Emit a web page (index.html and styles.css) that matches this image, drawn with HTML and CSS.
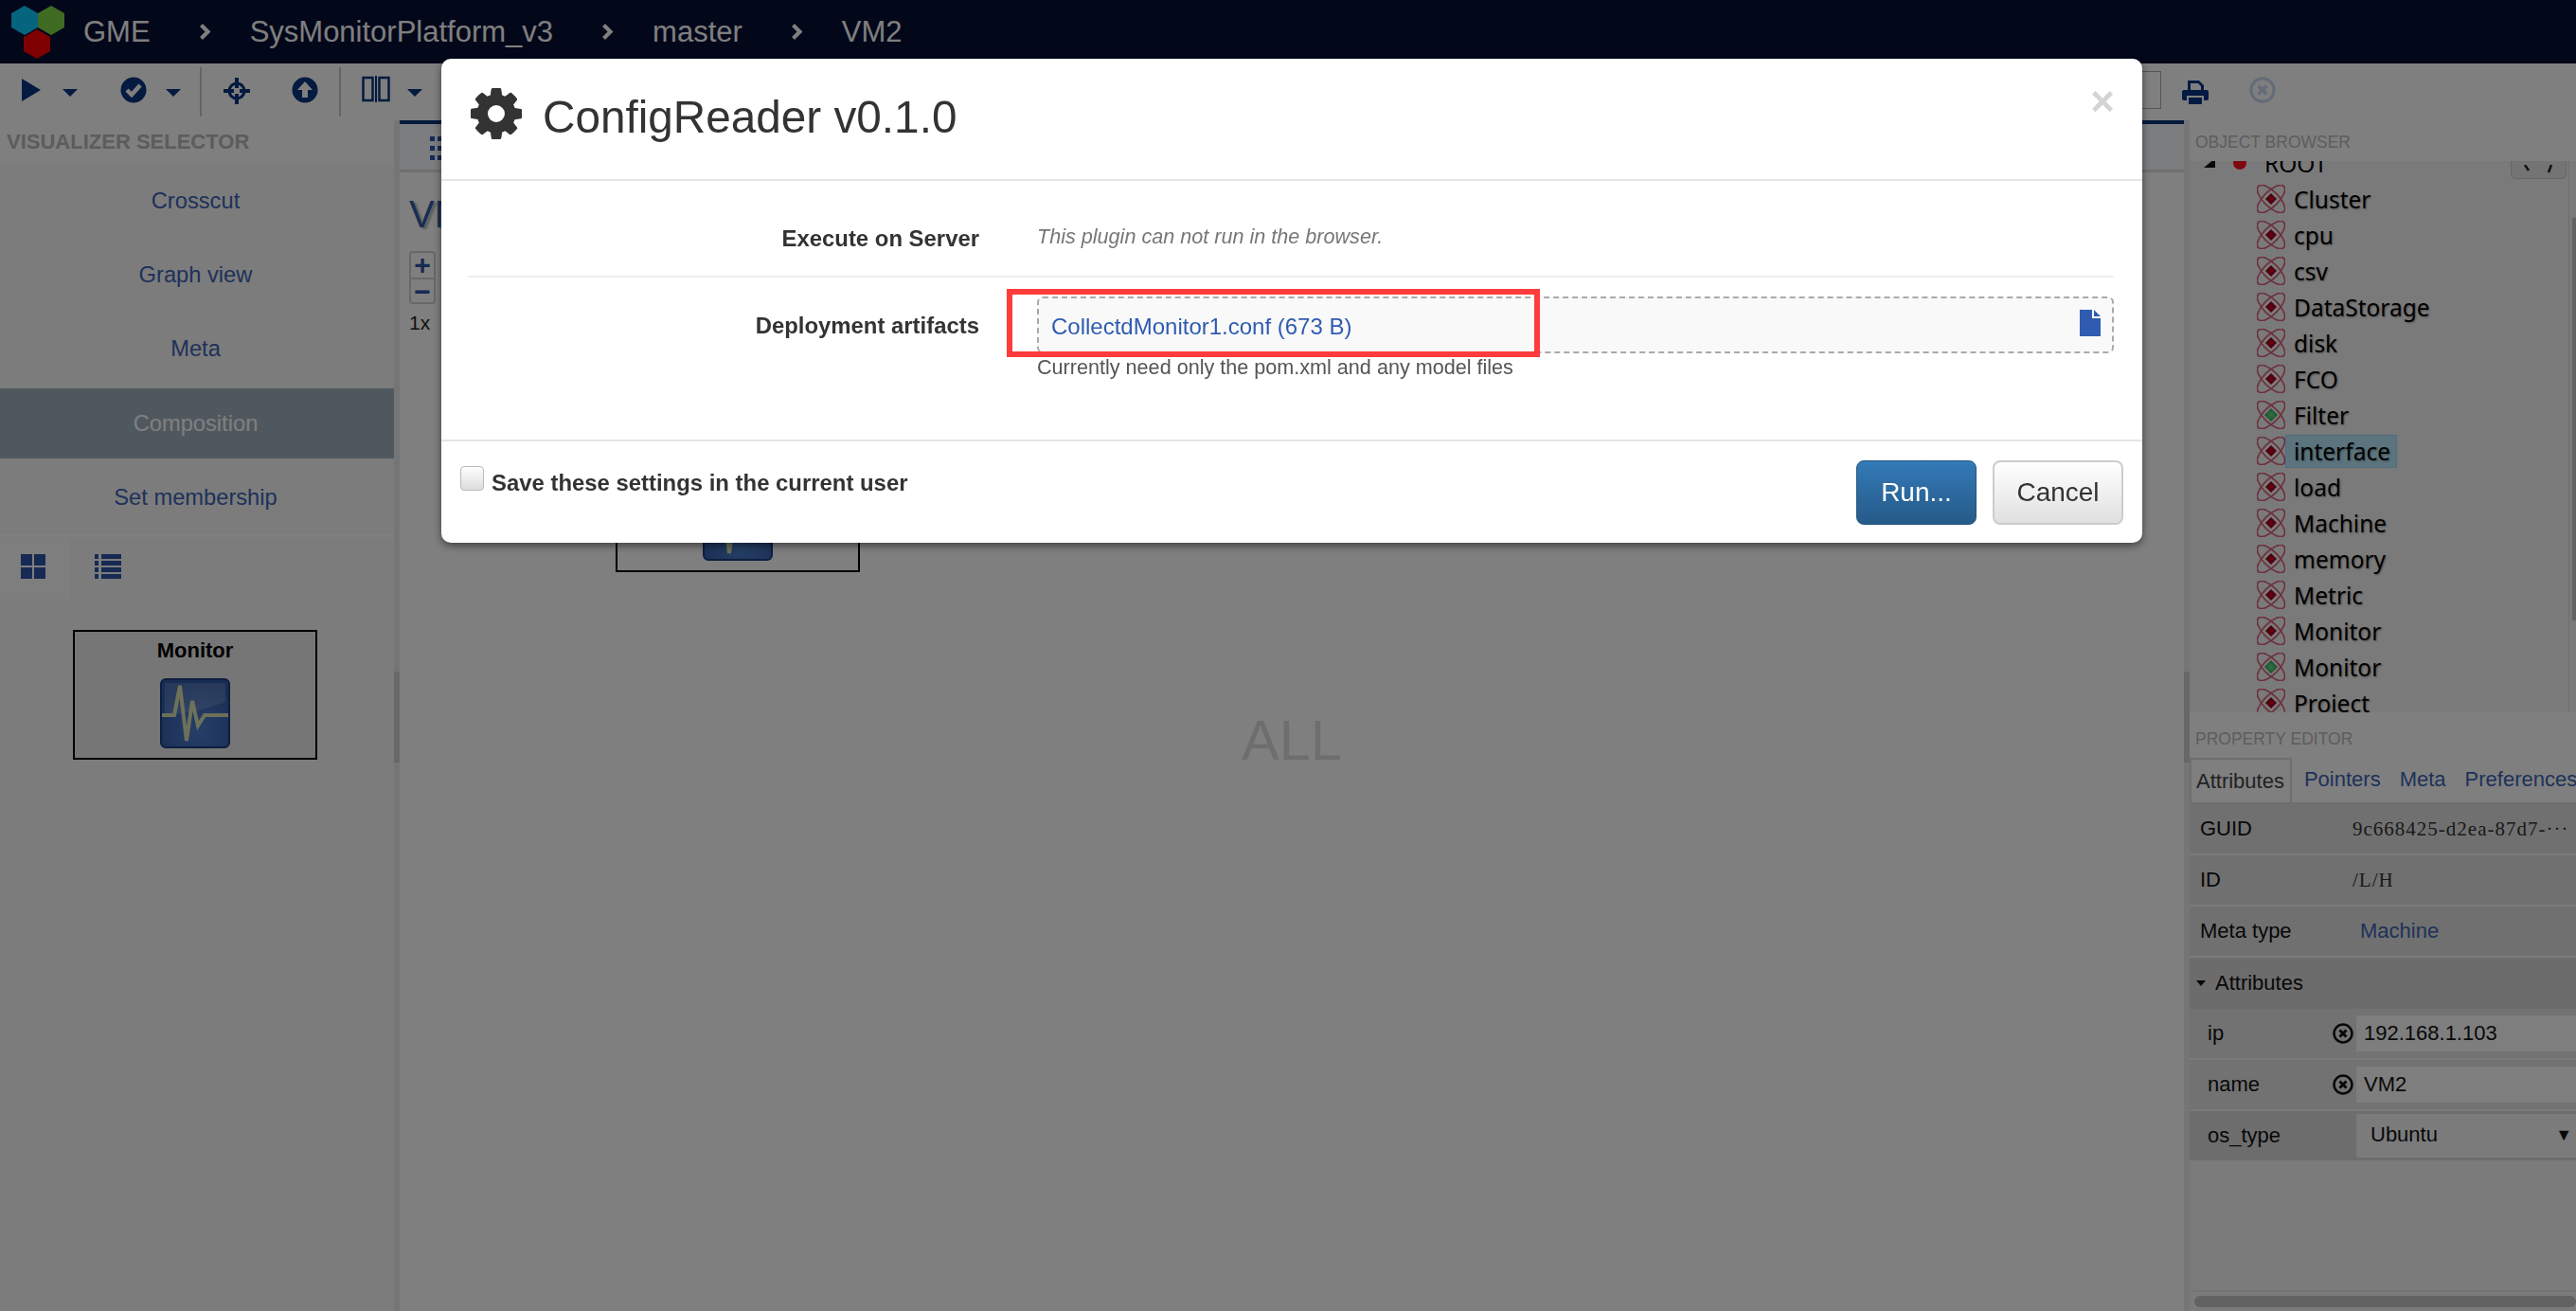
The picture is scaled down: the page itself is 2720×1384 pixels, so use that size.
FILE: index.html
```html
<!DOCTYPE html>
<html lang="en">
<head>
  <meta charset="UTF-8">
  <title>GME - ConfigReader</title>
  <link rel="stylesheet" href="styles.css">
</head>
<body>
  <svg class="defs" width="0" height="0">
    <defs>
      <radialGradient id="redGem"><stop offset="0" stop-color="#c80024"/><stop offset="1" stop-color="#8c0018"/></radialGradient>
      <radialGradient id="greenGem"><stop offset="0" stop-color="#70e090"/><stop offset="1" stop-color="#2aa050"/></radialGradient>
      <radialGradient id="monitorFace" cx="0.55" cy="0.75" r="0.7"><stop offset="0" stop-color="#4f7fcf"/><stop offset="1" stop-color="#305aa8"/></radialGradient>
      <g id="orbits" fill="none" stroke="#d8607c" stroke-width="1.700">
        <ellipse cx="15" cy="15" rx="19" ry="8" transform="rotate(45 15 15)"/>
        <ellipse cx="15" cy="15" rx="19" ry="8" transform="rotate(-45 15 15)"/>
      </g>
      <symbol id="atomRed" viewBox="0 0 30 30"><use href="#orbits"/><path d="M15 9l6 6-6 6-6-6z" fill="url(#redGem)"/></symbol>
      <symbol id="atomGreen" viewBox="0 0 30 30"><use href="#orbits"/><path d="M15 8l7 7-7 7-7-7z" fill="url(#greenGem)"/></symbol>
      <symbol id="monitorIcon" viewBox="0 0 74 74">
        <rect x="1" y="1" width="72" height="72" rx="5" fill="url(#monitorFace)" stroke="#1c3c7c" stroke-width="2"/>
        <path d="M5 5h64v20q-30 12-64 14z" fill="#fff" fill-opacity=".16"/>
        <path d="M2 39h13l6-31 7 58 6-42 6 26 7-11h25" fill="none" stroke="#f4f4b0" stroke-opacity=".85" stroke-width="4"/>
      </symbol>
      <symbol id="clearIcon" viewBox="0 0 22 22">
        <circle cx="11" cy="11" r="9.500" fill="none" stroke="currentColor" stroke-width="2.500"/>
        <path d="M7.500 7.500l7 7m0-7l-7 7" stroke="currentColor" stroke-width="3"/>
      </symbol>
      <symbol id="chevron" viewBox="0 0 13 17"><path d="M2.500 1.500l7 7-7 7" fill="none" stroke="currentColor" stroke-width="4.200"/></symbol>
    </defs>
  </svg>

  <header class="topbar">
    <svg class="logo" width="56" height="56" viewBox="0 0 56 56">
      <path d="M14 0l14 8v15l-14 8-14-8V8z" fill="#0cc8ff"/>
      <path d="M42 0l14 8v15l-14 8-14-8V8z" fill="#7ed644"/>
      <path d="M27 25l14 8v15l-14 8-14-8V33z" fill="#ff0000"/>
    </svg>
    <span class="crumb crumb-first">GME</span>
    <svg class="chev"><use href="#chevron"/></svg>
    <span class="crumb">SysMonitorPlatform_v3</span>
    <svg class="chev"><use href="#chevron"/></svg>
    <span class="crumb">master</span>
    <svg class="chev"><use href="#chevron"/></svg>
    <span class="crumb">VM2</span>
  </header>

  <div class="toolbar">
    <svg class="tool tool-play" width="22" height="24" viewBox="0 0 22 24"><path d="M1 0l20 12L1 24z"/></svg>
    <span class="caret caret-play"></span>
    <svg class="tool tool-check" width="28" height="28" viewBox="0 0 28 28"><circle cx="14" cy="14" r="13.500"/><path d="M7 14l5 5 9-10" fill="none" stroke="#fff" stroke-width="4.500"/></svg>
    <span class="caret caret-check"></span>
    <span class="tool-sep sep-one"></span>
    <svg class="tool tool-target" width="30" height="30" viewBox="0 0 30 30"><circle cx="15" cy="15" r="8" fill="none" stroke="#0a3480" stroke-width="3"/><path d="M13 1h4v11h-4zM13 18h4v11h-4zM1 13h11v4H1zM18 13h11v4H18z"/></svg>
    <svg class="tool tool-upload" width="28" height="28" viewBox="0 0 28 28"><circle cx="14" cy="14" r="13.500"/><path d="M14 5l8 9h-5v8h-6v-8H6z" fill="#fff"/></svg>
    <span class="tool-sep sep-two"></span>
    <svg class="tool tool-split" width="30" height="28" viewBox="0 0 30 28"><path d="M1.500 2h10v24h-10zM18.500 2h10v24h-10z" fill="none" stroke="#0a3480" stroke-width="2.500"/><path d="M14 0h2v28h-2z"/></svg>
    <span class="caret caret-split"></span>
    <span class="toolbar-fill"></span>
    <span class="search-box"></span>
    <svg class="tool tool-print" width="28" height="26" viewBox="0 0 28 26"><path d="M6 1h12l5 5v6h-3V7l-3-3H9v8H6zM2 11h24q2 0 2 2v7q0 2-2 2h-3v-5H5v5H2q-2 0-2-2v-7q0-2 2-2zM7 19h14v7H7z"/></svg>
    <svg class="tool-clear" width="28" height="28"><use href="#clearIcon"/></svg>
  </div>

  <main class="workspace">
    <aside class="left-panel">
      <div class="panel-title">VISUALIZER SELECTOR</div>
      <ul class="viz-list">
        <li>Crosscut</li>
        <li>Graph view</li>
        <li>Meta</li>
        <li class="active">Composition</li>
        <li>Set membership</li>
      </ul>
      <div class="part-tabs">
        <div class="part-tab active">
          <svg width="26" height="26" viewBox="0 0 26 26"><path d="M0 0h12v12H0zM14 0h12v12H14zM0 14h12v12H0zM14 14h12v12H14z"/></svg>
        </div>
        <div class="part-tab">
          <svg width="28" height="26" viewBox="0 0 28 26"><path d="M0 0h4v5H0zM7 0h21v5H7zM0 7h4v5H0zM7 7h21v5H7zM0 14h4v5H0zM7 14h21v5H7zM0 21h4v5H0zM7 21h21v5H7z"/></svg>
        </div>
      </div>
      <div class="part-box part-left">
        <div class="part-name">Monitor</div>
        <svg class="part-icon" width="74" height="74"><use href="#monitorIcon"/></svg>
      </div>
    </aside>

    <div class="splitter"><span class="handle"></span></div>

    <section class="center">
      <div class="center-tabs">
        <svg class="dots" width="24" height="26" viewBox="0 0 24 26"><path d="M0 0h5v5H0zM8 0h5v5H8zM16 0h5v5h-5zM0 10h5v5H0zM8 10h5v5H8zM16 10h5v5h-5zM0 20h5v5H0zM8 20h5v5H8zM16 20h5v5h-5z"/></svg>
      </div>
      <div class="canvas">
        <h1 class="canvas-title">VM2</h1>
        <div class="zoom-btns">
          <div class="zoom-btn">+</div>
          <div class="zoom-btn">&minus;</div>
        </div>
        <div class="zoom-level">1x</div>
        <div class="part-box part-canvas">
          <div class="part-name">Monitor</div>
          <svg class="part-icon" width="74" height="74"><use href="#monitorIcon"/></svg>
        </div>
        <div class="watermark">ALL</div>
      </div>
    </section>

    <div class="splitter"><span class="handle"></span></div>

    <aside class="right-panel">
      <div class="browser-head">OBJECT BROWSER</div>
      <div class="browser">
        <div class="tree-scroll">
          <span class="scroll-btn"><svg width="40" height="10" viewBox="0 0 40 10"><path d="M6 0l4 6M34 0l-3 8" fill="none" stroke="#222" stroke-width="2.500"/></svg></span>
          <div class="tree-root">
            <span class="root-arrow"></span>
            <span class="root-ball"></span>
            <span class="root-name">ROOT</span>
          </div>
          <ul class="tree">
            <li><svg><use href="#atomRed"/></svg><span>Cluster</span></li>
            <li><svg><use href="#atomRed"/></svg><span>cpu</span></li>
            <li><svg><use href="#atomRed"/></svg><span>csv</span></li>
            <li><svg><use href="#atomRed"/></svg><span>DataStorage</span></li>
            <li><svg><use href="#atomRed"/></svg><span>disk</span></li>
            <li><svg><use href="#atomRed"/></svg><span>FCO</span></li>
            <li><svg><use href="#atomGreen"/></svg><span>Filter</span></li>
            <li><svg><use href="#atomRed"/></svg><span class="selected">interface</span></li>
            <li><svg><use href="#atomRed"/></svg><span>load</span></li>
            <li><svg><use href="#atomRed"/></svg><span>Machine</span></li>
            <li><svg><use href="#atomRed"/></svg><span>memory</span></li>
            <li><svg><use href="#atomRed"/></svg><span>Metric</span></li>
            <li><svg><use href="#atomRed"/></svg><span>Monitor</span></li>
            <li><svg><use href="#atomGreen"/></svg><span>Monitor</span></li>
            <li><svg><use href="#atomRed"/></svg><span>Project</span></li>
          </ul>
        </div>
        <span class="tree-thumb"></span>
      </div>

      <div class="prop-editor">
        <div class="prop-head">PROPERTY EDITOR</div>
        <div class="prop-tabs">
          <span class="prop-tab active">Attributes</span>
          <span class="prop-tab">Pointers</span>
          <span class="prop-tab">Meta</span>
          <span class="prop-tab">Preferences</span>
        </div>
        <div class="prop-row"><span class="prop-label">GUID</span><span class="prop-mono">9c668425-d2ea-87d7-&middot;&middot;&middot;</span></div>
        <div class="prop-row"><span class="prop-label">ID</span><span class="prop-mono">/L/H</span></div>
        <div class="prop-row"><span class="prop-label">Meta type</span><span class="prop-link">Machine</span></div>
        <div class="prop-group"><span class="group-caret"></span>Attributes</div>
        <div class="attr-row">
          <span class="attr-label">ip</span>
          <svg class="attr-clear"><use href="#clearIcon"/></svg>
          <span class="attr-input">192.168.1.103</span>
        </div>
        <div class="attr-row">
          <span class="attr-label">name</span>
          <svg class="attr-clear"><use href="#clearIcon"/></svg>
          <span class="attr-input">VM2</span>
        </div>
        <div class="attr-row attr-select">
          <span class="attr-label">os_type</span>
          <span class="attr-input select-value">Ubuntu<span class="select-arrow">&#9660;</span></span>
        </div>
        <div class="prop-fill"></div>
        <div class="prop-scroll"><span class="prop-thumb"></span></div>
      </div>
    </aside>
  </main>

  <div class="backdrop"></div>

  <div class="modal">
    <div class="modal-header">
      <svg class="modal-gear" width="54" height="54" viewBox="128 128 1536 1536"><path fill-rule="evenodd" d="M1152 896q0-106-75-181t-181-75-181 75-75 181 75 181 181 75 181-75 75-181zm512-109v222q0 12-8 23t-20 13l-185 28q-19 54-39 91 35 50 107 138 10 12 10 25t-9 23q-27 37-99 108t-94 71q-12 0-26-9l-138-108q-44 23-91 38-16 136-29 186-7 28-36 28h-222q-14 0-24.500-8.500t-11.500-21.500l-28-184q-49-16-90-37l-141 107q-10 9-25 9-14 0-25-11-126-114-165-168-7-10-7-23 0-12 8-23 15-21 51-66.500t54-70.500q-27-50-41-99l-183-27q-13-2-21-12.500t-8-23.500v-222q0-12 8-23t19-13l186-28q14-46 39-92-40-57-107-138-10-12-10-24 0-10 9-23 26-36 98.500-107.500t94.500-71.500q13 0 26 10l138 107q44-23 91-38 16-136 29-186 7-28 36-28h222q14 0 24.500 8.500t11.500 21.500l28 184q49 16 90 37l142-107q9-9 24-9 13 0 25 10 129 119 165 170 7 8 7 22 0 12-8 23-15 21-51 66.500t-54 70.500q26 50 41 98l183 28q13 2 21 12.500t8 23.500z"/></svg>
      <h3 class="modal-title">ConfigReader v0.1.0</h3>
      <span class="modal-close">&times;</span>
    </div>
    <div class="modal-body">
      <div class="form-row row-server">
        <label class="form-label">Execute on Server</label>
        <em class="form-note">This plugin can not run in the browser.</em>
      </div>
      <div class="form-row row-artifacts">
        <label class="form-label">Deployment artifacts</label>
        <div class="form-value">
          <div class="drop-zone">
            <a class="file-link">CollectdMonitor1.conf (673 B)</a>
            <svg class="file-icon" width="22" height="28" viewBox="0 0 22 28"><path d="M0 0h13v9h9v19H0zM15 0l7 7h-7z"/></svg>
          </div>
          <p class="help-text">Currently need only the pom.xml and any model files</p>
        </div>
      </div>
    </div>
    <div class="modal-footer">
      <label class="save-check"><input type="checkbox"><span>Save these settings in the current user</span></label>
      <button class="btn btn-run">Run...</button>
      <button class="btn btn-cancel">Cancel</button>
    </div>
    <div class="callout"></div>
  </div>
</body>
</html>
```

FILE: styles.css
```css
* {
  box-sizing: border-box;
}

html, body {
  margin: 0;
  height: 100%;
}

body {
  display: flex;
  flex-direction: column;
  overflow: hidden;
  font-family: "Liberation Sans", Arial, sans-serif;
  background: #fff;
  color: #222;
}

.defs {
  position: absolute;
}

ul {
  list-style: none;
  margin: 0;
  padding: 0;
}

/* top bar */
.topbar {
  display: flex;
  align-items: center;
  flex: none;
  height: 67px;
  padding-left: 12px;
  background: #070e34;
  color: #fff;
}

.logo {
  flex: none;
  margin-top: 1px;
}

.crumb {
  font-size: 31px;
  white-space: nowrap;
}

.crumb-first {
  margin-left: 20px;
}

.chev {
  width: 13px;
  height: 17px;
  margin: 0 41px 0 51px;
  color: #fff;
}

/* toolbar */
.toolbar {
  display: flex;
  align-items: flex-start;
  flex: none;
  height: 60px;
  background: #fff;
}

.tool {
  fill: #0a3480;
  flex: none;
  margin-top: 14px;
}

.tool-play {
  margin-left: 22px;
  margin-top: 16px;
}

.caret {
  flex: none;
  width: 0;
  height: 0;
  margin-top: 27px;
  border-left: 8px solid transparent;
  border-right: 8px solid transparent;
  border-top: 8px solid #0a3480;
}

.caret-play {
  margin-left: 22px;
}

.tool-check {
  margin-left: 45px;
}

.caret-check {
  margin-left: 20px;
}

.tool-sep {
  flex: none;
  width: 2px;
  height: 52px;
  margin-top: 4px;
  background: #c8c8c8;
}

.sep-one {
  margin-left: 20px;
}

.tool-target {
  margin-left: 22px;
}

.tool-upload {
  margin-left: 43px;
  margin-top: 14px;
}

.sep-two {
  margin-left: 22px;
}

.tool-split {
  margin-left: 22px;
  margin-top: 13px;
}

.caret-split {
  margin-left: 18px;
}

.toolbar-fill {
  flex: 1;
}

.search-box {
  flex: none;
  width: 30px;
  height: 40px;
  margin-top: 8px;
  border: 1px solid #aaa;
}

.tool-print {
  margin-left: 22px;
  margin-top: 17px;
}

.tool-clear {
  flex: none;
  margin: 14px 317px 0 43px;
  color: #c8d8ee;
}

/* main area */
.workspace {
  display: flex;
  flex: 1;
  min-height: 0;
}

.splitter {
  display: flex;
  flex: none;
  align-items: flex-start;
  width: 6px;
  padding-top: 582px;
  background: #eaeaea;
}

.handle {
  display: block;
  width: 100%;
  height: 96px;
  background: #d0d0d0;
}

/* visualizer selector */
.left-panel {
  flex: none;
  width: 416px;
  margin-top: -2px;
  background: #f8f8f8;
}

.panel-title {
  height: 48px;
  padding: 13px 0 0 7px;
  font-size: 22px;
  font-weight: bold;
  line-height: 24px;
  color: #b8b8b8;
  background: #fff;
}

.viz-list {
  border-bottom: 3px solid #ffffff;
}

.viz-list li {
  height: 78px;
  padding-right: 3px;
  line-height: 78px;
  text-align: center;
  font-size: 23.700px;
  color: #3c64b4;
}

.viz-list li.active {
  height: 74px;
  margin: 3px 0 2px;
  line-height: 74px;
  color: #fff;
  background: #a1b0bf;
}

.part-tabs {
  display: flex;
  height: 66px;
}

.part-tab {
  width: 74px;
  padding: 18px 0 0 22px;
  fill: #2c55a8;
}

.part-tab + .part-tab {
  padding-left: 26px;
}

.part-tab.active {
  margin-top: 1px;
  padding-top: 17px;
  background: #fcfcfc;
}

.part-box {
  width: 258px;
  height: 137px;
  border: 2px solid #000;
  text-align: center;
  background: #ececec;
}

.part-left {
  margin: 32px 0 0 77px;
}

.part-name {
  padding-top: 8px;
  font-size: 22px;
  font-weight: bold;
  line-height: 24px;
  color: #000;
}

.part-icon {
  display: block;
  margin: 17px auto 0;
}

/* center canvas */
.center {
  display: flex;
  flex: 1;
  flex-direction: column;
  min-width: 0;
}

.center-tabs {
  flex: none;
  height: 55px;
  padding: 13px 0 0 32px;
  border-top: 4px solid #083478;
  border-bottom: 3px solid #dedede;
  background: #f6fafe;
  fill: #2c55a8;
}

.canvas {
  position: relative;
  flex: 1;
  padding: 0 10px;
  background: #fff;
}

.canvas-title {
  margin: 21px 0 0;
  font-size: 40px;
  font-weight: normal;
  line-height: 46px;
  color: #2f5aa8;
  text-shadow: 3px 2px 2px #bbb;
}

.zoom-btns {
  width: 28px;
  margin-top: 16px;
  border: 2px solid #d0d0d0;
  border-radius: 4px;
}

.zoom-btn {
  height: 26px;
  font-size: 30px;
  font-weight: bold;
  line-height: 25px;
  text-align: center;
  color: #2c55a8;
}

.zoom-btn + .zoom-btn {
  border-top: 2px solid #d0d0d0;
}

.zoom-level {
  margin-top: 8px;
  font-size: 21px;
  line-height: 24px;
  color: #222;
}

.part-canvas {
  position: absolute;
  left: 228px;
  top: 285px;
  background: #fff;
}

.watermark {
  position: absolute;
  left: 0;
  right: 0;
  top: 565px;
  font-size: 59.500px;
  line-height: 70px;
  text-align: center;
  color: #dcdcdc;
}

/* object browser */
.right-panel {
  display: flex;
  flex: none;
  flex-direction: column;
  width: 408px;
  margin-top: -2px;
}

.browser-head {
  flex: none;
  height: 45px;
  padding: 14px 0 0 6px;
  font-size: 17.500px;
  line-height: 22px;
  color: #bbb;
  background: #fff;
}

.browser {
  position: relative;
  display: flex;
  flex: none;
  height: 582px;
  overflow: hidden;
  background: #f5f5f5;
}

.tree-scroll {
  flex: 1;
  margin-right: 7px;
  border-right: 1px solid #ddd;
}

.scroll-btn {
  position: absolute;
  top: -20px;
  left: 339px;
  width: 59px;
  height: 39px;
  padding: 19px 0 0 8px;
  border: 1px solid #ccc;
  border-radius: 5px;
  background: #e8e8e8;
}

.tree-root {
  display: flex;
  align-items: center;
  height: 38px;
  margin-top: -17px;
  font-family: "Noto Sans", sans-serif;
  font-size: 24.500px;
  color: #000;
}

.root-arrow {
  width: 12px;
  height: 10px;
  margin: 0 0 0 15px;
  background: #111;
  clip-path: polygon(100% 0, 100% 100%, 0 100%);
}

.root-ball {
  width: 14px;
  height: 14px;
  margin-left: 19px;
  border-radius: 50%;
  background: #ff1020;
}

.root-name {
  margin-left: 19px;
}

.tree li {
  display: flex;
  align-items: center;
  height: 38px;
  padding-left: 71px;
  font-family: "Noto Sans", sans-serif;
  font-size: 24.500px;
  color: #000;
  text-shadow: 1px 1px 2px rgba(0, 0, 0, 0.35);
}

.tree svg {
  flex: none;
  width: 30px;
  height: 30px;
}

.tree span {
  height: 35px;
  padding: 0 8px;
  border: 1px solid transparent;
  line-height: 33px;
}

.tree span.selected {
  padding-right: 6px;
  background: #b8e8fc;
  border-color: #a0d8ff;
}

.tree-thumb {
  position: absolute;
  right: 0;
  top: 60px;
  width: 4px;
  height: 425px;
  background: #c4c4c4;
}

/* property editor */
.prop-editor {
  display: flex;
  flex: 1;
  flex-direction: column;
  min-height: 0;
  background: #f6f6f6;
}

.prop-head {
  flex: none;
  height: 48px;
  padding: 17px 0 0 6px;
  font-size: 17.500px;
  line-height: 22px;
  color: #bbb;
  background: #fff;
}

.prop-tabs {
  display: flex;
  flex: none;
  height: 49px;
  border-bottom: 2px solid #ddd;
  background: #fff;
  font-size: 22px;
  line-height: 46px;
  white-space: nowrap;
  overflow: hidden;
}

.prop-tab {
  padding: 0 7px;
  margin-right: 6px;
  color: #3c64b4;
}

.prop-tab.active {
  height: 49px;
  padding: 0 6px 0 5px;
  border: 2px solid #ddd;
  border-bottom: 0;
  color: #444;
  background: #fff;
}

.prop-row {
  display: flex;
  flex: none;
  align-items: center;
  height: 54px;
  padding-left: 11px;
  border-bottom: 2px solid #f8f8f8;
  background: #e0e0e0;
  font-size: 22px;
}

.prop-label {
  width: 161px;
  flex: none;
  color: #111;
}

.prop-mono {
  font-family: "Liberation Serif", serif;
  font-size: 21px;
  letter-spacing: 1px;
  color: #333;
  white-space: nowrap;
}

.prop-link {
  margin-left: 8px;
  color: #3c64b4;
}

.prop-group {
  display: flex;
  flex: none;
  align-items: center;
  height: 54px;
  padding-left: 7px;
  background: #d8d8d8;
  font-size: 22px;
  color: #111;
}

.group-caret {
  width: 0;
  height: 0;
  margin-right: 10px;
  border-left: 5px solid transparent;
  border-right: 5px solid transparent;
  border-top: 6px solid #111;
}

.attr-row {
  display: flex;
  flex: none;
  align-items: center;
  height: 54px;
  padding-left: 19px;
  border-bottom: 2px solid #f4f4f4;
  background: #e4e4e4;
  font-size: 22px;
  color: #111;
}

.attr-label {
  flex: none;
  width: 132px;
}

.attr-clear {
  flex: none;
  width: 22px;
  height: 22px;
  margin-right: 3px;
  color: #111;
}

.attr-input {
  flex: 1;
  height: 38px;
  padding-left: 8px;
  line-height: 37px;
  background: #fcfcfc;
}

.attr-select {
  height: 52px;
  border-bottom: 0;
  background: #dadada;
}

.attr-select .attr-label {
  width: 157px;
}

.select-value {
  display: flex;
  justify-content: space-between;
  height: 46px;
  padding: 0 4px 0 15px;
  line-height: 44px;
  background: #f6f6f6;
}

.select-arrow {
  font-size: 18px;
}

.prop-fill {
  flex: 1;
}

.prop-scroll {
  flex: none;
  height: 22px;
  padding: 4px 0 0 5px;
  border-top: 2px solid #e8e8e8;
}

.prop-thumb {
  display: block;
  height: 12px;
  border-radius: 6px;
  background: #c4c4c4;
}

/* modal */
.backdrop {
  position: fixed;
  inset: 0;
  background: rgba(0, 0, 0, 0.5);
}

.modal {
  position: fixed;
  left: 466px;
  top: 62px;
  display: flex;
  flex-direction: column;
  width: 1796px;
  height: 511px;
  border-radius: 10px;
  background: #fff;
  box-shadow: 0 3px 8px rgba(0, 0, 0, 0.5);
  color: #333;
}

.modal-header {
  display: flex;
  flex: none;
  align-items: center;
  height: 129px;
  padding: 0 0 10px 31px;
  border-bottom: 2px solid #e5e5e5;
}

.modal-gear {
  flex: none;
  margin-bottom: 2px;
  fill: #333;
}

.modal-title {
  margin: 6px 0 0 22px;
  font-size: 47.700px;
  font-weight: normal;
  line-height: 56px;
}

.modal-close {
  margin: -28px 29px 0 auto;
  font-size: 44px;
  font-weight: bold;
  line-height: 44px;
  color: #d4d4d4;
}

.modal-body {
  flex: 1;
  padding: 0 30px 0 28px;
}

.form-row {
  display: flex;
}

.row-server {
  height: 102px;
  padding-top: 47px;
  border-bottom: 2px solid #eee;
}

.row-artifacts {
  height: 171px;
  padding-top: 20px;
}

.form-label {
  flex: none;
  width: 540px;
  font-size: 23.900px;
  font-weight: bold;
  line-height: 27px;
  text-align: right;
  color: #333;
}

.row-artifacts .form-label {
  padding-top: 17px;
}

.form-note {
  margin: -2px 0 0 61px;
  font-size: 21.600px;
  line-height: 27px;
  color: #777;
}

.form-value {
  flex: 1;
  margin-left: 61px;
}

.drop-zone {
  display: flex;
  align-items: center;
  justify-content: space-between;
  height: 60px;
  padding: 0 12px 0 13px;
  border: 2px dashed #aaa;
  border-radius: 6px;
  background: #f9f9f9;
}

.file-link {
  padding-top: 3px;
  font-size: 24px;
  color: #2f5cb0;
}

.file-icon {
  fill: #2f5cb0;
  margin-top: -4px;
}

.help-text {
  margin: 3px 0 0;
  font-size: 21.600px;
  line-height: 24px;
  color: #555;
}

.modal-footer {
  display: flex;
  flex: none;
  align-items: flex-start;
  height: 109px;
  padding: 20px 20px 0 18px;
  border-top: 2px solid #e5e5e5;
}

.save-check {
  display: flex;
  align-items: flex-start;
  margin-right: auto;
  font-size: 23.900px;
  font-weight: bold;
  line-height: 27px;
}

.save-check span {
  margin-top: 10px;
}

.save-check input {
  appearance: none;
  width: 25px;
  height: 26px;
  margin: 6px 8px 0 2px;
  border: 1px solid #bbb;
  border-radius: 4px;
  background: linear-gradient(#fff, #dcdcdc);
}

.btn {
  height: 68px;
  border-radius: 8px;
  font-family: inherit;
  font-size: 28px;
}

.btn-run {
  width: 127px;
  border: 1px solid #245580;
  background: linear-gradient(#337ab7, #265a88);
  color: #fff;
}

.btn-cancel {
  width: 138px;
  margin-left: 17px;
  border: 2px solid #ccc;
  background: linear-gradient(#fff, #e0e0e0);
  color: #333;
}

.callout {
  position: absolute;
  left: 597px;
  top: 243px;
  width: 563px;
  height: 72px;
  border: 6px solid #ff3b3b;
}
```
